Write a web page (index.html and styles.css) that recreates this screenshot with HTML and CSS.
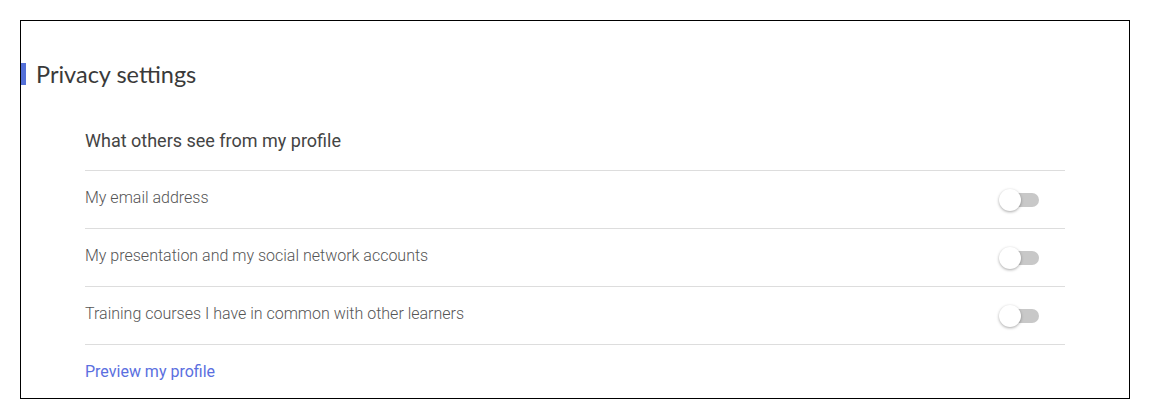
FILE: index.html
```html
<!DOCTYPE html>
<html lang="en">

<head>
  <meta charset="UTF-8">
  <meta name="viewport" content="width=device-width, initial-scale=1.0">
  <title>Privacy settings</title>
  <link rel="stylesheet" href="styles.css">
</head>

<body>
  <div class="panel">
    <h2 class="panel-title">Privacy settings</h2>

    <div class="privacy">
      <h3 class="privacy-heading">What others see from my profile</h3>

      <div class="privacy-row">
        <span class="privacy-label">My email address</span>
        <label class="switch"><input type="checkbox"><span class="slider"></span></label>
      </div>
      <div class="privacy-row">
        <span class="privacy-label">My presentation and my social network accounts</span>
        <label class="switch"><input type="checkbox"><span class="slider"></span></label>
      </div>
      <div class="privacy-row">
        <span class="privacy-label">Training courses I have in common with other learners</span>
        <label class="switch"><input type="checkbox"><span class="slider"></span></label>
      </div>

      <div class="privacy-footer">
        <a href="#" class="preview-link">Preview my profile</a>
      </div>
    </div>
  </div>
</body>

</html>
```

FILE: styles.css
```css
body {
  margin: 0;
  padding: 20px;
  background-color: #ffffff;
  font-family: Roboto, Arial, sans-serif;
}

.panel {
  box-sizing: border-box;
  width: 1110px;
  height: 379px;
  border: 1px solid #000000;
  padding-top: 42px;
}

.panel-title {
  margin: 0;
  border-left: 5px solid #5470d8;
  padding-left: 10px;
  font-family: Lato, "Open Sans", sans-serif;
  font-size: 23.5px;
  font-weight: 400;
  line-height: 22px;
  color: #3a3a3a;
}

.privacy {
  margin: 0 64px;
}

.privacy-heading {
  margin: 44px 0 0;
  padding-bottom: 17px;
  border-bottom: 1px solid #dddddd;
  font-size: 18px;
  font-weight: 400;
  line-height: 24px;
  color: #444444;
}

.privacy-row {
  display: flex;
  justify-content: space-between;
  align-items: center;
  height: 57px;
  border-bottom: 1px solid #dddddd;
  font-size: 16px;
  font-weight: 300;
  color: #555555;
}

.privacy-label {
  padding-bottom: 4px;
}

.switch {
  position: relative;
  display: inline-block;
  width: 40px;
  height: 24px;
  margin-right: 26px;
  margin-bottom: 2px;
}

.switch input {
  display: none;
}

.slider {
  position: absolute;
  top: 6px;
  left: 2px;
  right: 0;
  height: 14px;
  border-radius: 7px;
  background-color: #c8c8c8;
  cursor: pointer;
}

.slider::before {
  content: "";
  position: absolute;
  top: -4px;
  left: -2px;
  width: 22px;
  height: 22px;
  border-radius: 50%;
  background-color: #ffffff;
  box-shadow: 0 1px 3px rgba(0, 0, 0, 0.35);
}

.privacy-footer {
  padding: 17px 0 15px;
}

.preview-link {
  font-size: 16px;
  line-height: 20px;
  color: #5b6fe0;
  text-decoration: none;
}
```
